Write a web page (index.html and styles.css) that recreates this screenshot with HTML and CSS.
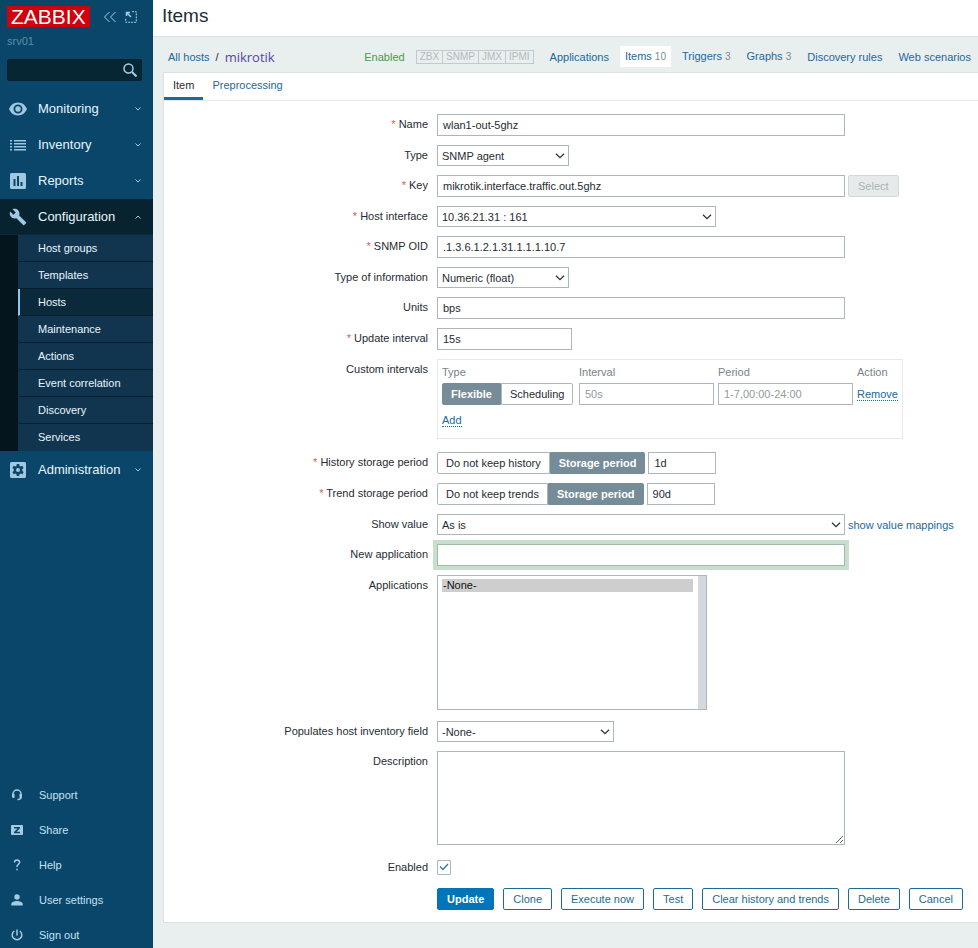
FILE: index.html
```
<!DOCTYPE html>
<html lang="en">
  <head>
    <meta charset="UTF-8" />
    <meta name="viewport" content="width=device-width, initial-scale=1.0" />
    <title>Configuration of items</title>
    <link rel="stylesheet" href="styles.css">
  </head>
  <body>
    <aside class="sidebar">
      <div class="sidebar-head">
        <a class="logo" href="#">ZABBIX</a>
        <button class="icon-btn" type="button" aria-label="Collapse sidebar">
          <svg width="14" height="12" viewBox="0 0 14 12"><path d="M6.500 1 1.500 6l5 5M12.500 1l-5 5 5 5" /></svg>
        </button>
        <button class="icon-btn" type="button" aria-label="Hide sidebar">
          <svg width="12" height="12" viewBox="0 0 12 12"><path d="M1.500 5V1.500H5M2 2l4 4" stroke-width="1.500" /><path stroke-dasharray="2 1" d="M7 .7h4.300v10.600H.7V7" /></svg>
        </button>
      </div>
      <div class="server-name">srv01</div>
      <form class="search">
        <input type="text" aria-label="Search">
        <button type="button" aria-label="Search">
          <svg width="14" height="14" viewBox="0 0 14 14"><circle cx="5.500" cy="5.500" r="4.500" stroke-width="1.500" /><path d="M9 9l4.500 4.500" stroke-width="2" /></svg>
        </button>
      </form>

      <nav class="menu">
        <a class="menu-item" href="#">
          <svg class="menu-icon" viewBox="0 0 18 18"><path fill-rule="evenodd" d="M9 2.500C4.800 2.500 1.500 5.300 0 9c1.500 3.700 4.800 6.500 9 6.500s7.500-2.800 9-6.500c-1.500-3.700-4.800-6.500-9-6.500zM9 13.500a4.500 4.500 0 1 1 0-9 4.500 4.500 0 0 1 0 9zM9 6.300a2.700 2.700 0 1 0 0 5.400 2.700 2.700 0 0 0 0-5.400z" /></svg>
          <span>Monitoring</span>
          <svg class="chevron" viewBox="0 0 6 4"><path d="M.5.500 3 3 5.500.500" /></svg>
        </a>
        <a class="menu-item" href="#">
          <svg class="menu-icon" viewBox="0 0 18 18"><path d="M1 4h2v1.500H1zM1 7h2v1.500H1zM1 10h2v1.500H1zM1 13h2v1.500H1zM5 4h12v1.500H5zM5 7h12v1.500H5zM5 10h12v1.500H5zM5 13h12v1.500H5z" /></svg>
          <span>Inventory</span>
          <svg class="chevron" viewBox="0 0 6 4"><path d="M.5.500 3 3 5.500.500" /></svg>
        </a>
        <a class="menu-item" href="#">
          <svg class="menu-icon" viewBox="0 0 18 18"><path fill-rule="evenodd" d="M2.500 1h13A1.500 1.500 0 0 1 17 2.500v13a1.500 1.500 0 0 1-1.500 1.500h-13A1.500 1.500 0 0 1 1 15.500v-13A1.500 1.500 0 0 1 2.500 1zM4.500 7v7h2V7zM8 4v10h2V4zM11.500 10v4h2v-4z" /></svg>
          <span>Reports</span>
          <svg class="chevron" viewBox="0 0 6 4"><path d="M.5.500 3 3 5.500.500" /></svg>
        </a>
        <a class="menu-item open" href="#">
          <svg class="menu-icon" viewBox="0 0 24 24"><path d="M22.700 19l-9.100-9.100c.9-2.300.4-5-1.500-6.900-2-2-5-2.400-7.400-1.300L9 6 6 9 1.600 4.700C.4 7.100.9 10.100 2.900 12.100c1.900 1.900 4.600 2.400 6.900 1.500l9.100 9.100c.4.4 1 .4 1.400 0l2.300-2.300c.5-.4.5-1.100.1-1.400z" /></svg>
          <span>Configuration</span>
          <svg class="chevron" viewBox="0 0 6 4"><path d="M.5 3.500 3 1l2.500 2.500" /></svg>
        </a>
        <ul class="submenu">
          <li><a href="#">Host groups</a></li>
          <li><a href="#">Templates</a></li>
          <li class="selected"><a href="#">Hosts</a></li>
          <li><a href="#">Maintenance</a></li>
          <li><a href="#">Actions</a></li>
          <li><a href="#">Event correlation</a></li>
          <li><a href="#">Discovery</a></li>
          <li><a href="#">Services</a></li>
        </ul>
        <a class="menu-item" href="#">
          <svg class="menu-icon" viewBox="0 0 18 18"><path fill-rule="evenodd" d="M2.500 1h13A1.500 1.500 0 0 1 17 2.500v13a1.500 1.500 0 0 1-1.500 1.500h-13A1.500 1.500 0 0 1 1 15.500v-13A1.500 1.500 0 0 1 2.500 1zM7.800 3l-.3 1.700-1.200.7-1.700-.6-1.200 2.100L4.700 8v1.900l-1.300 1.200 1.200 2.100 1.700-.6 1.200.7.300 1.700h2.400l.3-1.700 1.200-.7 1.700.6 1.200-2.100-1.300-1.200V8l1.300-1.100-1.200-2.100-1.700.6-1.200-.7L10.200 3zM9 7a2 2 0 1 1 0 4 2 2 0 0 1 0-4z" /></svg>
          <span>Administration</span>
          <svg class="chevron" viewBox="0 0 6 4"><path d="M.5.500 3 3 5.500.500" /></svg>
        </a>
      </nav>

      <nav class="user-menu">
        <a href="#">
          <svg viewBox="0 0 12 12"><path class="line" d="M2 6V5a4 4 0 0 1 8 0v3.500c0 1.500-1 2-3.500 2" /><path d="M1 5h2.500v4H2.300C1.300 9 1 8 1 7.500zM11 5H8.500v4h1.200c1 0 1.300-1 1.300-1.500z" /></svg>
          Support
        </a>
        <a href="#">
          <svg viewBox="0 0 12 12"><path fill-rule="evenodd" d="M1 1h10q1 0 1 1v8q0 1-1 1H1q-1 0-1-1V2q0-1 1-1zM3 3v1.500h3.500L3 8v1.200h6V7.700H5.500L9 4.200V3z" /></svg>
          Share
        </a>
        <a href="#">
          <svg viewBox="0 0 12 12"><path class="line" d="M3.500 3.500C3.500 0 8.600.3 8.600 3.200 8.600 5.200 6 5.500 6 8M6 9.700v1.600" /></svg>
          Help
        </a>
        <a href="#">
          <svg viewBox="0 0 12 12"><circle cx="6" cy="3" r="2.700" /><path d="M.3 11.500V10C.3 8 3.500 7 6 7s5.700 1 5.700 3v1.500z" /></svg>
          User settings
        </a>
        <a href="#">
          <svg viewBox="0 0 12 12"><path class="line" d="M6 .5v6M3.200 2A4.800 4.800 0 1 0 8.800 2" /></svg>
          Sign out
        </a>
      </nav>
    </aside>

    <main>
      <header>
        <h1>Items</h1>
      </header>

      <div class="host-bar">
        <a href="#">All hosts</a>
        <span class="slash">/</span>
        <a class="host-name" href="#">mikrotik</a>
        <nav class="host-nav">
          <span class="status-on">Enabled</span>
          <span class="interfaces"><span>ZBX</span><span>SNMP</span><span>JMX</span><span>IPMI</span></span>
          <a href="#">Applications</a>
          <a class="current" href="#">Items <small>10</small></a>
          <a href="#">Triggers <small>3</small></a>
          <a href="#">Graphs <small>3</small></a>
          <a href="#">Discovery rules</a>
          <a href="#">Web scenarios</a>
        </nav>
      </div>

      <div class="panel">
        <nav class="tabs">
          <a class="active" href="#">Item</a>
          <a href="#">Preprocessing</a>
        </nav>

        <form class="item-form">
          <div class="row">
            <label class="required" for="name">Name</label>
            <div class="field"><input class="wide" type="text" id="name" value="wlan1-out-5ghz"></div>
          </div>
          <div class="row">
            <label for="type">Type</label>
            <div class="field">
              <select class="short" id="type"><option>SNMP agent</option></select>
            </div>
          </div>
          <div class="row">
            <label class="required" for="key">Key</label>
            <div class="field">
              <input class="wide" type="text" id="key" value="mikrotik.interface.traffic.out.5ghz">
              <button class="btn" type="button" disabled>Select</button>
            </div>
          </div>
          <div class="row">
            <label class="required" for="interface">Host interface</label>
            <div class="field">
              <select class="interface" id="interface"><option>10.36.21.31 : 161</option></select>
            </div>
          </div>
          <div class="row">
            <label class="required" for="oid">SNMP OID</label>
            <div class="field"><input class="wide" type="text" id="oid" value=".1.3.6.1.2.1.31.1.1.1.10.7"></div>
          </div>
          <div class="row">
            <label for="value-type">Type of information</label>
            <div class="field">
              <select class="short" id="value-type"><option>Numeric (float)</option></select>
            </div>
          </div>
          <div class="row">
            <label for="units">Units</label>
            <div class="field"><input class="wide" type="text" id="units" value="bps"></div>
          </div>
          <div class="row">
            <label class="required" for="delay">Update interval</label>
            <div class="field"><input class="small" type="text" id="delay" value="15s"></div>
          </div>
          <div class="row">
            <label for="interval-flex">Custom intervals</label>
            <div class="field">
              <div class="intervals">
                <table>
                  <thead>
                    <tr><th class="type-col">Type</th><th>Interval</th><th>Period</th><th>Action</th></tr>
                  </thead>
                  <tbody>
                    <tr>
                      <td>
                        <div class="segmented">
                          <input type="radio" name="interval-type" id="interval-flex" checked><label for="interval-flex">Flexible</label>
                          <input type="radio" name="interval-type" id="interval-sched"><label for="interval-sched">Scheduling</label>
                        </div>
                      </td>
                      <td><input class="small" type="text" placeholder="50s" aria-label="Interval"></td>
                      <td><input class="small" type="text" placeholder="1-7,00:00-24:00" aria-label="Period"></td>
                      <td><button class="btn-link" type="button">Remove</button></td>
                    </tr>
                  </tbody>
                </table>
                <button class="btn-link" type="button">Add</button>
              </div>
            </div>
          </div>
          <div class="row">
            <label class="required" for="history">History storage period</label>
            <div class="field">
              <div class="segmented">
                <input type="radio" name="history-mode" id="history-off"><label for="history-off">Do not keep history</label>
                <input type="radio" name="history-mode" id="history-on" checked><label for="history-on">Storage period</label>
              </div>
              <input class="tiny" type="text" id="history" value="1d">
            </div>
          </div>
          <div class="row">
            <label class="required" for="trends">Trend storage period</label>
            <div class="field">
              <div class="segmented">
                <input type="radio" name="trends-mode" id="trends-off"><label for="trends-off">Do not keep trends</label>
                <input type="radio" name="trends-mode" id="trends-on" checked><label for="trends-on">Storage period</label>
              </div>
              <input class="tiny" type="text" id="trends" value="90d">
            </div>
          </div>
          <div class="row">
            <label for="valuemap">Show value</label>
            <div class="field">
              <select class="wide" id="valuemap"><option>As is</option></select>
              <a href="#">show value mappings</a>
            </div>
          </div>
          <div class="row">
            <label for="new-app">New application</label>
            <div class="field"><input class="wide focused" type="text" id="new-app"></div>
          </div>
          <div class="row">
            <label for="apps">Applications</label>
            <div class="field">
              <select class="apps" id="apps" multiple><option selected>-None-</option></select>
            </div>
          </div>
          <div class="row">
            <label for="inventory">Populates host inventory field</label>
            <div class="field">
              <select class="inventory" id="inventory"><option>-None-</option></select>
            </div>
          </div>
          <div class="row">
            <label for="description">Description</label>
            <div class="field"><textarea class="wide" id="description"></textarea></div>
          </div>
          <div class="row check-row">
            <label for="enabled">Enabled</label>
            <div class="field"><input type="checkbox" id="enabled" checked></div>
          </div>
          <div class="row">
            <span></span>
            <div class="field actions">
              <button class="btn primary" type="button">Update</button>
              <button class="btn" type="button">Clone</button>
              <button class="btn" type="button">Execute now</button>
              <button class="btn" type="button">Test</button>
              <button class="btn" type="button">Clear history and trends</button>
              <button class="btn" type="button">Delete</button>
              <button class="btn" type="button">Cancel</button>
            </div>
          </div>
        </form>
      </div>
    </main>
  </body>
</html>
```

FILE: styles.css
```
* {
  margin: 0;
  padding: 0;
  box-sizing: border-box;
}

body {
  display: flex;
  min-height: 100vh;
  background-color: #e9eeef;
  color: #1f2c33;
  font: 11px/20px "Liberation Sans", Arial, sans-serif;
}

input,
select,
textarea,
button {
  font: inherit;
  color: inherit;
}

a {
  color: #1a699f;
  text-decoration: none;
}

/* Sidebar */
.sidebar {
  display: flex;
  flex-direction: column;
  flex: 0 0 153px;
  min-width: 0;
  background-color: #0a466a;
}

.sidebar-head {
  display: flex;
  align-items: center;
  gap: 8px;
  padding: 6px 7px 0;
}

.logo {
  margin-right: 5px;
  padding: 0 4px;
  background-color: #d0000c;
  color: #fff;
  font-size: 21px;
  line-height: 21px;
}

.icon-btn {
  display: flex;
  border: none;
  background: none;
  cursor: pointer;
}

.icon-btn svg,
.search svg,
.chevron {
  fill: none;
  stroke: #a5cbe2;
}

.server-name {
  padding: 4px 7px 8px;
  color: #5b8cab;
}

.search {
  display: flex;
  align-items: center;
  height: 22px;
  margin: 0 11px 10px 7px;
  padding-right: 4px;
  border: 1px solid #06202f;
  border-radius: 2px;
  background-color: #072634;
}

.search input {
  flex: 1;
  min-width: 0;
  outline: none;
  color: #fff;
}

.search button {
  display: flex;
  border: none;
  background: none;
}

.menu {
  display: flex;
  flex-direction: column;
  gap: 1px;
}

.menu-item {
  display: flex;
  align-items: center;
  height: 35px;
  padding: 0 12px 0 9px;
  color: #e8f5fd;
  font-size: 13px;
}

.menu-item.open {
  margin-bottom: -1px;
  background-color: #07232f;
}

.menu-icon {
  width: 18px;
  height: 18px;
  margin-right: 11px;
  fill: #a0c8e0;
}

.chevron {
  width: 6px;
  height: 4px;
  margin-left: auto;
}

.submenu {
  padding: 0 0 0 18px;
  border-top: 1px solid #0a2a3b;
  background-color: #05151e;
  list-style: none;
}

.submenu li {
  border-bottom: 1px solid #071e2f;
  border-left: 2px solid #11354f;
  background-color: #11354f;
}

.submenu li:last-child {
  border-bottom-color: #11354f;
}

.submenu .selected {
  border-left-color: #8cc8ee;
  background-color: #0a2a3b;
}

.submenu a {
  display: block;
  padding-left: 18px;
  color: #e8f5fd;
  line-height: 26px;
}

.user-menu {
  display: flex;
  flex-direction: column;
  gap: 9px;
  margin-top: auto;
}

.user-menu a {
  display: flex;
  align-items: center;
  gap: 16px;
  height: 26px;
  padding-left: 11px;
  color: #c5e2f2;
}

.user-menu svg {
  width: 12px;
  height: 12px;
  fill: #a5cbe2;
}

.user-menu .line {
  fill: none;
  stroke: #a5cbe2;
  stroke-width: 1.5;
}

/* Page head */
main {
  flex: 1;
  min-width: 0;
}

header {
  padding: 4px 9px 8px;
  border-bottom: 1px solid #dce2e4;
  background-color: #fff;
}

h1 {
  font-size: 19px;
  font-weight: normal;
  line-height: 24px;
}

.host-bar {
  display: flex;
  align-items: center;
  gap: 6px;
  height: 35px;
  padding: 4px 7px 0 15px;
  white-space: nowrap;
}

.host-name {
  color: #5546a8;
  font: 13px/24px "Open Sans", sans-serif;
}

.host-nav {
  display: flex;
  align-items: center;
  gap: 16px;
  margin-left: auto;
}

.status-on {
  margin-right: -5px;
  color: #429e47;
}

.interfaces {
  display: flex;
  border: 1px solid #c3cacd;
  color: #b3babd;
  font-size: 10px;
  line-height: 12px;
}

.interfaces span {
  padding: 0 3px;
}

.interfaces span + span {
  border-left: 1px solid #c3cacd;
}

.current {
  margin: 0 -5px;
  padding: 0 5px;
  background-color: #fff;
}

small {
  color: #7e8a91;
  font-size: 10px;
}

/* Form panel */
.panel {
  margin-left: 10px;
  border: 1px solid #dce2e4;
  border-right: none;
  background-color: #fff;
}

.tabs {
  display: flex;
  border-bottom: 1px solid #e4e9eb;
}

.tabs a {
  padding: 2px 9px;
  border-bottom: 3px solid transparent;
}

.tabs .active {
  border-bottom-color: #1a699f;
  color: #1f2c33;
}

.item-form {
  display: flex;
  flex-direction: column;
  gap: 9px;
  padding: 13px 9px 12px 0;
}

.row {
  display: grid;
  grid-template-columns: 264px minmax(0, 1fr);
  gap: 9px;
}

.row > label {
  text-align: right;
}

.required::before {
  content: "* ";
  color: #d0605a;
}

.field {
  display: flex;
  align-items: center;
  gap: 3px;
  white-space: nowrap;
}

input[type="text"],
select,
textarea {
  height: 22px;
  border: 1px solid #acb6bb;
  border-radius: 0;
  background-color: #fff;
}

input[type="text"] {
  padding: 0 5px;
}

.search input[type="text"] {
  height: 20px;
  border: none;
  background: none;
}

::placeholder {
  color: #929a9e;
}

select {
  appearance: none;
  height: 21px;
  padding: 0 20px 0 4px;
  background: #fff url("data:image/svg+xml,%3Csvg xmlns='http://www.w3.org/2000/svg' width='10' height='6'%3E%3Cpath d='M1 .7l4 4 4-4' fill='none' stroke='%23333' stroke-width='1.3'/%3E%3C/svg%3E") no-repeat right 3px center;
}

.wide {
  width: 408px;
}

.short {
  width: 132px;
}

.interface {
  width: 279px;
}

.inventory {
  width: 177px;
}

.small {
  width: 135px;
}

.tiny {
  width: 68px;
}

.wide.focused {
  outline: none;
  border-color: #9dbfa6;
  box-shadow: 0 0 0 4px #c9dfcd;
}

.apps {
  width: 270px;
  height: 135px;
  margin-bottom: 2px;
  padding: 3px 13px 3px 4px;
  background: linear-gradient(#d3dadd, #d3dadd) no-repeat right / 8px 100%;
  overflow: hidden;
}

.apps option {
  min-height: 13px;
  padding: 0 1px;
  line-height: 13px;
}

textarea {
  height: 94px;
  padding: 4px 5px;
}

.btn {
  height: 22px;
  padding: 0 9px;
  border: 1px solid #1d6c94;
  border-radius: 2px;
  background-color: #fff;
  color: #1d6c94;
  white-space: nowrap;
  cursor: pointer;
}

.btn.primary {
  border-color: #0275b8;
  background-color: #0275b8;
  color: #fff;
  font-weight: bold;
}

.btn:disabled {
  border-color: #d3d8da;
  background-color: #e6eaeb;
  color: #aab2b6;
}

.actions {
  gap: 9px;
}

.btn-link {
  border: none;
  border-bottom: 1px dotted #1a699f;
  background: none;
  color: #1a699f;
  line-height: 12px;
  cursor: pointer;
}

/* Radio buttons drawn as a button group */
.segmented {
  display: flex;
}

.segmented input {
  position: absolute;
  opacity: 0;
}

.segmented label {
  padding: 0 8px;
  border: 1px solid #acb6bb;
  border-radius: 0 2px 2px 0;
  line-height: 20px;
  white-space: nowrap;
}

.segmented label:first-of-type {
  border-radius: 2px 0 0 2px;
}

.segmented input:checked + label {
  border-color: #768d99;
  background-color: #768d99;
  color: #fff;
  font-weight: bold;
}

.intervals {
  margin-bottom: 4px;
  padding: 0 4px 8px;
  border: 1px solid #e4e9eb;
}

.intervals table {
  margin-bottom: 5px;
  border-collapse: collapse;
}

.intervals th {
  height: 23px;
  color: #768489;
  font-weight: normal;
  text-align: left;
}

.intervals .type-col {
  width: 137px;
}

.intervals td {
  padding-right: 4px;
}

.intervals td:last-child {
  padding-right: 0;
}

.check-row {
  padding: 3px 0 2px;
}

input[type="checkbox"] {
  appearance: none;
  width: 14px;
  height: 15px;
  border: 1px solid #acb6bb;
  border-radius: 1px;
}

input[type="checkbox"]:checked {
  background: url("data:image/svg+xml,%3Csvg xmlns='http://www.w3.org/2000/svg' width='10' height='8'%3E%3Cpath d='M1 3.500l3 3L9 1' fill='none' stroke='%23387a9a' stroke-width='1.4'/%3E%3C/svg%3E") no-repeat center;
}
```
